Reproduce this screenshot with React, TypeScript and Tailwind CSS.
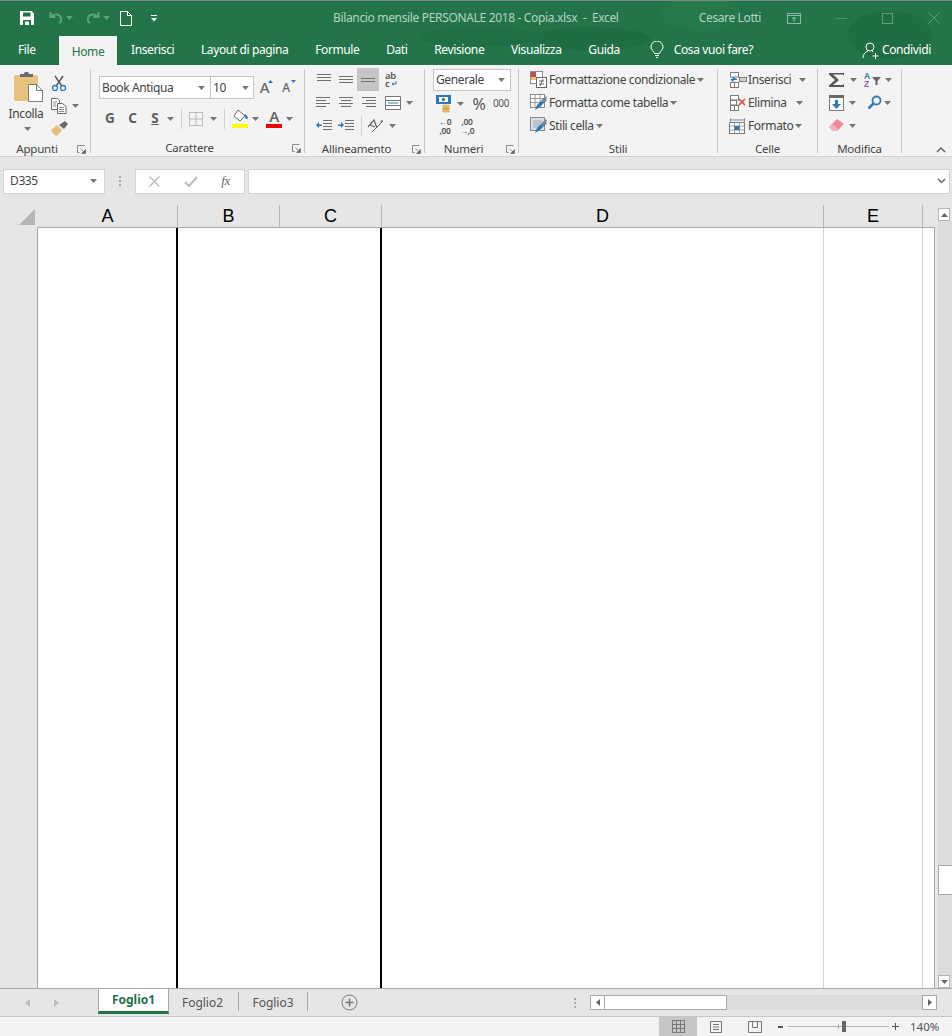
import React from "react";

const Caret = ({ c = "#747474", className = "" }: { c?: string; className?: string }) => (
  <svg width="7" height="4" viewBox="0 0 7 4" className={"shrink-0 " + className}><path d="M0 0h7L3.500 4z" fill={c} /></svg>
);

const Sep = () => <div className="w-px h-[84px] bg-[#c6c6c6] shrink-0 mt-1" />;

const Launcher = () => (
  <svg width="9" height="9" viewBox="0 0 9 9" className="shrink-0">
    <path d="M.5 .5h7M.5 .5v7M.5 7.500h2" stroke="#8a8a8a" fill="none" />
    <path d="M3.500 3.500l4 4M8.500 4.500v4h-4z" stroke="#6a6a6a" fill="#6a6a6a" strokeWidth=".7" />
  </svg>
);

const GroupLabel = ({ text, launcher, right = 4 }: { text: string; launcher?: boolean; right?: number }) => (
  <div className={"h-[16px] mt-[2px] relative flex items-center justify-center text-[11.5px] tracking-[-0.2px] text-[#444] " + (launcher ? "pr-[16px]" : "")}>
    {text}
    {launcher && <span className="absolute top-[4px] flex" style={{ right }}><Launcher /></span>}
  </div>
);

const Lines = ({ rows }: { rows: [number, number][] }) => (
  <svg width="16" height="16" viewBox="0 0 16 16">
    {rows.map(([x, w], i) => (
      <rect key={i} x={x} y={2 + i * 3} width={w} height="1" fill="#6f6f6f" />
    ))}
  </svg>
);

const Cell = ({ children, w = 22, bg = "" }: { children?: React.ReactNode; w?: number; bg?: string }) => (
  <div className={"flex items-center justify-center h-[23px] shrink-0 " + bg} style={{ width: w }}>{children}</div>
);

const Paste = () => (
  <svg width="30" height="32" viewBox="0 0 30 32">
    <rect x="0" y="4" width="24" height="26" rx="2" fill="#e9c27e" />
    <path d="M6 5V3h4c0-3 5-3 5 0h4v3H6z" fill="#6b6b6b" />
    <path d="M14.500 13.500h8l6 6v11h-14z" fill="#fff" stroke="#7a7a7a" />
    <path d="M22.500 13.500v6h6" fill="none" stroke="#7a7a7a" />
  </svg>
);
const Scissors = () => (
  <svg width="16" height="16" viewBox="0 0 16 16" fill="none">
    <path d="M4 1l6.500 9.500M12 1L5.500 10.500" stroke="#555" strokeWidth="1.400" />
    <circle cx="4" cy="13" r="2.500" stroke="#2f78b8" strokeWidth="1.300" />
    <circle cx="12" cy="13" r="2.500" stroke="#2f78b8" strokeWidth="1.300" />
  </svg>
);
const Copy = () => (
  <svg width="16" height="16" viewBox="0 0 16 16" fill="#fff" stroke="#6a6a6a">
    <path d="M.5 .5h6l2 2v9h-8z" />
    <path d="M6.500 5.500h5l3.500 3v7h-8.500z" />
    <path d="M8 9.500h5M8 11.500h5M8 13.500h5M2 4h4M2 6h3M2 8h3" strokeWidth=".8" />
  </svg>
);
const Brush = () => (
  <svg width="17" height="15" viewBox="0 0 17 15">
    <path d="M0 9l6-5 5 5-5 6c-1 0-5-3-6-6z" fill="#e8bf7a" />
    <path d="M8 4l6-4 3 3-4 5z" fill="#6a6a6a" />
  </svg>
);
const Bold = ({ t, u }: { t: string; u?: boolean }) => (
  <span className={"text-[13.5px] font-bold text-[#5f5f5f] leading-none tracking-normal " + (u ? "underline" : "")}>{t}</span>
);
const BorderIcon = () => (
  <svg width="14" height="14" viewBox="0 0 14 14" fill="none" stroke="#8a8a8a" strokeDasharray="1 1">
    <path d="M.5 .5h13v13H.5zM7 .5v13M.5 7h13" />
  </svg>
);
const FillIcon = () => (
  <svg width="17" height="19" viewBox="0 0 17 19">
    <path d="M6 1l7 6-5 5-6-5z" fill="#fff" stroke="#666" />
    <path d="M13 5c2 1 3 3 3 5-2 0-4-2-4-3z" fill="#3d7ab5" />
    <rect x="0" y="15" width="16" height="4" fill="#ffff00" />
  </svg>
);
const FontColor = () => (
  <div className="flex flex-col items-center w-4 h-[19px] relative">
    <span className="text-[15px] leading-[15px] font-semibold text-[#666]">A</span>
    <div className="w-4 h-1 bg-[#f00000]" />
  </div>
);
const Money = () => (
  <svg width="16" height="18" viewBox="0 0 16 18">
    <rect x="0" y="0" width="15" height="9" fill="#2f78b8" />
    <rect x="3" y="2" width="9" height="5" fill="#fff" />
    <circle cx="7.500" cy="4.500" r="1.700" fill="#2f78b8" />
    <ellipse cx="10" cy="11" rx="4" ry="1.600" fill="#e3b860" />
    <ellipse cx="10" cy="13.500" rx="4" ry="1.600" fill="#d6a648" />
    <ellipse cx="10" cy="16" rx="4" ry="1.600" fill="#e3b860" />
  </svg>
);
const Indent = ({ right }: { right?: boolean }) => (
  <svg width="16" height="13" viewBox="0 0 16 13">
    <path d="M7 1.500h9M7 4.500h9M7 7.500h9M7 10.500h9" stroke="#6f6f6f" />
    <path d={right ? "M0 5.500h3V3l3 3-3 3V7H0z" : "M6 5.500H3V3L0 6l3 3V7h3z"} fill="#2f78b8" />
  </svg>
);
const Orient = () => (
  <svg width="20" height="16" viewBox="0 0 20 16" fill="none">
    <path d="M1 9l6-7 3 8M3 7l5 2" stroke="#666" strokeWidth="1.200" />
    <path d="M5 14L15 4" stroke="#666" />
    <path d="M16 2l-3 1 2 2z" fill="#666" />
  </svg>
);
const Wrap = () => (
  <svg width="16" height="18" viewBox="0 0 16 18" fill="none">
    <text x="1" y="7.500" fontSize="9.500" fontWeight="600" fontFamily="Noto Sans" fill="#555">ab</text>
    <text x="1" y="15.500" fontSize="9.500" fontWeight="600" fontFamily="Noto Sans" fill="#555">c</text>
    <path d="M12 10v3H8M9.500 11.500L8 13l1.500 1.500" stroke="#2f78b8" />
  </svg>
);
const CondFmt = () => (
  <svg width="17" height="17" viewBox="0 0 17 17">
    <rect x=".5" y=".5" width="12" height="12" fill="#fff" stroke="#8a8a8a" />
    <rect x="1" y="1" width="5" height="5" fill="#c0504d" />
    <rect x="1" y="6" width="5" height="3" fill="#e8bf7a" />
    <rect x="6.500" y="6.500" width="10" height="10" fill="#fff" stroke="#666" />
    <path d="M9 10h5M9 13h5M13 8l-3 7" stroke="#555" strokeWidth=".9" />
  </svg>
);
const TableFmt = ({ solid }: { solid?: boolean }) => (
  <svg width="17" height="17" viewBox="0 0 17 17">
    <rect x=".5" y=".5" width="14" height="13" fill={solid ? "#d7dfe8" : "#fff"} stroke="#8a8a8a" />
    {!solid && <path d="M.5 4.500h14M.5 8.500h14M5 .5v13M10 .5v13" stroke="#9a9a9a" />}
    {solid && <rect x="3" y="3" width="9" height="8" fill="#b8c4d2" />}
    <path d="M5 16l2-5 7-7 3 2-7 7z" fill="#2f78b8" />
    <path d="M11 7l5-5 1 2-4 5z" fill="#8a8a8a" />
  </svg>
);
const CellsIcon = ({ kind }: { kind: "ins" | "del" | "fmt" }) => (
  <svg width="18" height="16" viewBox="0 0 18 16" fill="#fff" stroke="#7a7a7a">
    {kind === "fmt" ? (
      <>
        <path d="M1.500 .5v3M15.500 .5v3M2 2h13" stroke="#4d6f94" strokeWidth=".8" />
        <rect x=".5" y="4.500" width="15" height="11" />
        <path d="M.5 8h15M.5 12h15M5.500 4.500v11M10.500 4.500v11" strokeWidth=".7" />
        <rect x="5.500" y="8" width="5" height="4" fill="#2f78b8" stroke="none" />
      </>
    ) : (
      <>
        <rect x="1.500" y=".5" width="8" height="4.500" />
        <rect x="1.500" y="10.500" width="8" height="5" />
        <path d="M5.500 10.500v5" />
        {kind === "ins" ? (
          <>
            <rect x="10.500" y="5.500" width="7" height="4" fill="#d0d0d0" />
            <path d="M0 7.500h6l-2-2v4z" fill="#2f78b8" stroke="#2f78b8" transform="rotate(180 4 7.500)" />
          </>
        ) : (
          <>
            <rect x="1.500" y="5.500" width="6" height="4.500" />
            <path d="M10 4l6 6M16 4l-6 6" stroke="#d0492f" strokeWidth="1.500" />
          </>
        )}
      </>
    )}
  </svg>
);
const Sigma = () => (
  <svg width="16" height="14" viewBox="0 0 16 14"><path d="M0 0h15v3l-1-1.500H4l6 5.500-6 5h10l1-1.500v3.500H0v-1.500L6 7 0 1.500z" fill="#555" /></svg>
);
const Sort = () => (
  <svg width="22" height="17" viewBox="0 0 22 17">
    <text x="0" y="7.500" fontSize="8.500" fontFamily="Liberation Sans" fontWeight="700" fill="#2f78b8">A</text>
    <text x="0" y="16" fontSize="8.500" fontFamily="Liberation Sans" fontWeight="700" fill="#8a5ca8">Z</text>
    <path d="M8 6h9l-3.500 4v4h-2v-4z" fill="#666" />
  </svg>
);
const FillDown = () => (
  <svg width="15" height="16" viewBox="0 0 15 16">
    <rect x=".5" y=".5" width="14" height="15" fill="#fff" stroke="#7a7a7a" />
    <rect x="0" y="0" width="15" height="3" fill="#6a6a6a" />
    <path d="M6 5h3v4h3l-4.500 5L3 9h3z" fill="#2f78b8" />
  </svg>
);
const Search = () => (
  <svg width="15" height="15" viewBox="0 0 15 15" fill="none">
    <circle cx="9.500" cy="5.500" r="4" stroke="#2f78b8" strokeWidth="1.800" />
    <path d="M6.500 8.500L1.500 13.500" stroke="#2f78b8" strokeWidth="2.500" />
  </svg>
);
const Eraser = () => (
  <svg width="15" height="13" viewBox="0 0 15 13">
    <path d="M0 8l8-8 7 5-7 7H4z" fill="#ef8a98" />
    <path d="M0 8l3-3 6 5-2 2H4z" fill="#f3b4bd" />
  </svg>
);

const Tabs = () => (
  <div className="flex items-end h-8 text-[12px] text-white relative">
    <div className="w-[59px] pl-[18px] h-8 flex items-center">File</div>
    <div className="w-[58px] h-[30px] bg-[#f3f3f3] text-[#217346] flex items-center justify-center pt-[2px]">Home</div>
    <div className="flex h-8 items-center gap-[26.7px] pl-[14px]">
      <span>Inserisci</span>
      <span>Layout di pagina</span>
      <span>Formule</span>
      <span>Dati</span>
      <span>Revisione</span>
      <span>Visualizza</span>
      <span>Guida</span>
    </div>
    <div className="flex h-8 items-center ml-[30px] gap-[10px]">
      <svg width="14" height="18" viewBox="0 0 14 18" fill="none" stroke="#fff"><path d="M4.500 12.500C4 10 1 9 1 6a6 6 0 0 1 12 0c0 3-3 4-3.500 6.500zM5 14.500h4M6 16.500h2" /></svg>
      <span>Cosa vuoi fare?</span>
    </div>
    <div className="flex h-8 items-center ml-auto pr-[21px] gap-[3px]">
      <svg width="17" height="17" viewBox="0 0 17 17" fill="none" stroke="#fff"><circle cx="8" cy="5" r="4" /><path d="M1 16c0-4 2.500-6 5-7M10 9l1 1M10.500 14h6M13.500 11v6" /></svg>
      <span>Condividi</span>
    </div>
  </div>
);

const TitleBar = () => (
  <div className="h-8 flex items-center relative mt-px">
    <div className="flex items-center pl-[19px]">
      <svg width="16" height="16" viewBox="0 0 16 16"><path d="M1 1h11.500L15 3.500V15H1z" fill="#fff" /><rect x="4" y="2.500" width="7.500" height="4" fill="#217346" /><rect x="4" y="10" width="8" height="5" fill="#217346" /><rect x="6" y="11.500" width="4" height="3.500" fill="#fff" /></svg>
      <svg width="14" height="14" viewBox="0 0 14 14" fill="none" stroke="#5f9d7b" strokeWidth="2" className="ml-[14px]"><path d="M1.500 1v5h5M2 6c3-4 9-3 10 1 .5 2 0 4-2 5" /></svg>
      <Caret c="#5f9d7b" className="ml-[3px]" />
      <svg width="14" height="14" viewBox="0 0 14 14" fill="none" stroke="#5f9d7b" strokeWidth="2" className="ml-[13px]"><path d="M12.500 1v5h-5M12 6C9 2 3 3 2 7c-.5 2 0 4 2 5" /></svg>
      <Caret c="#5f9d7b" className="ml-[3px]" />
      <svg width="12" height="15" viewBox="0 0 12 15" fill="none" stroke="#fff" className="ml-[10px]"><path d="M.5 .5h7l4 4v10H.5zM7.500 .5v4h4" /></svg>
      <svg width="7" height="7" viewBox="0 0 7 7" className="ml-[19px]"><path d="M0 0h6v1H0zM0 3h6L3 6.500z" fill="#fff" /></svg>
    </div>
    <div className="absolute left-[333px] text-[12px] tracking-[-0.34px] text-[#b5d2c2] whitespace-pre">Bilancio mensile PERSONALE 2018 - Copia.xlsx  -  Excel</div>
    <div className="ml-auto flex items-center">
      <span className="text-[12px] text-[#b5d2c2]">Cesare Lotti</span>
      <svg width="14" height="11" viewBox="0 0 14 11" fill="none" stroke="#8fbaa3" className="ml-[26px]"><path d="M.5 .5h13v10H.5zM.5 2.500h13M7 9V4M5 6l2-2 2 2" /></svg>
      <div className="w-[11px] h-px bg-[#4f9270] ml-[35px]" />
      <div className="w-[11px] h-[11px] border border-[#5f9d7b] ml-[35px]" />
      <svg width="12" height="12" viewBox="0 0 12 12" stroke="#5f9d7b" className="ml-[35px] mr-[12px]"><path d="M.5 .5l11 11M11.500 .5l-11 11" /></svg>
    </div>
  </div>
);

const Ribbon = () => (
  <div className="h-[92px] bg-[#f3f3f3] border-b border-[#d2d2d2] flex text-[12px] text-[#444] shrink-0">
    {/* Appunti */}
    <div className="w-[90px] flex flex-col shrink-0">
      <div className="h-[66px] flex mt-[6px] mb-[2px]">
        <div className="w-[50px] flex flex-col items-center pl-[4px]">
          <span className="flex pl-[4px]"><Paste /></span>
          <span className="mt-[2px] leading-[17px] pr-[2px]">Incolla</span>
          <Caret className="mt-[5px]" />
        </div>
        <div className="flex flex-col">
          <Cell w={18}><Scissors /></Cell>
          <div className="flex items-center h-[23px]"><Cell w={18}><Copy /></Cell><Caret className="ml-[4px]" /></div>
          <Cell w={18}><Brush /></Cell>
        </div>
      </div>
      <GroupLabel text="Appunti" launcher />
    </div>
    <Sep />
    {/* Carattere */}
    <div className="w-[213px] flex flex-col shrink-0">
      <div className="h-[66px] mt-[6px] mb-[2px] pl-[8px] pt-[5px]">
        <div className="flex items-center">
          <div className="w-[112px] h-[23px] bg-white border border-[#c6c6c6] flex items-center justify-between px-[2px] pr-[5px]"><span>Book Antiqua</span><Caret /></div>
          <div className="w-[43px] h-[23px] bg-white border border-l-0 border-[#c6c6c6] flex items-center justify-between pl-[2px] pr-[4px]"><span>10</span><Caret /></div>
          <span className="relative w-[21px] text-center text-[15px] font-medium text-[#666] leading-none">A<svg width="5" height="3" className="absolute right-[2px] top-[0px]"><path d="M0 3h5L2.500 0z" fill="#2f78b8" /></svg></span>
          <span className="relative w-[22px] text-center text-[12px] font-medium text-[#666] leading-none">A<svg width="5" height="3" className="absolute right-[1px] top-[-2px]"><path d="M0 0h5L2.500 3z" fill="#2f78b8" /></svg></span>
        </div>
        <div className="flex items-center mt-[8px]">
          <Cell w={22}><Bold t="G" /></Cell>
          <Cell w={23}><Bold t="C" /></Cell>
          <Cell w={22}><Bold t="S" u /></Cell>
          <Caret className="ml-[1px]" />
          <div className="w-px h-5 bg-[#d0d0d0] ml-[7px]" />
          <Cell w={28}><BorderIcon /></Cell>
          <Caret />
          <div className="w-px h-5 bg-[#d0d0d0] ml-[7px]" />
          <Cell w={30}><FillIcon /></Cell>
          <Caret className="ml-[-3px]" />
          <Cell w={30}><FontColor /></Cell>
          <Caret className="ml-[-3px]" />
        </div>
      </div>
      <GroupLabel text="Carattere" launcher right={3} />
    </div>
    <Sep />
    {/* Allineamento */}
    <div className="w-[119px] flex flex-col shrink-0">
      <div className="h-[66px] mt-[3px] mb-[5px] pl-[8px]">
        <div className="flex items-center">
          <Cell><Lines rows={[[1, 14], [1, 14], [1, 14]]} /></Cell>
          <Cell><span className="pt-1"><Lines rows={[[1, 14], [1, 14], [1, 14]]} /></span></Cell>
          <Cell bg="bg-[#c6c6c6]"><span className="pt-2"><Lines rows={[[1, 14], [1, 14]]} /></span></Cell>
          <div className="w-[26px] h-[23px] flex items-center justify-center"><Wrap /></div>
        </div>
        <div className="flex items-center">
          <Cell><Lines rows={[[0, 14], [0, 10], [0, 14], [0, 10]]} /></Cell>
          <Cell><Lines rows={[[1, 14], [3, 10], [1, 14], [3, 10]]} /></Cell>
          <Cell><Lines rows={[[2, 14], [6, 10], [2, 14], [6, 10]]} /></Cell>
          <svg width="16" height="14" viewBox="0 0 16 14" fill="#fff" stroke="#777" className="ml-[6px]"><path d="M.5 .5h15v13H.5zM.5 4.500h15M.5 9.500h15" /><path d="M3 7h10" stroke="#2f78b8" /></svg>
          <Caret className="ml-[5px]" />
        </div>
        <div className="flex items-center">
          <Cell><Indent /></Cell>
          <Cell><Indent right /></Cell>
          <div className="w-px h-5 bg-[#d0d0d0] ml-[4px]" />
          <Cell w={30}><Orient /></Cell>
          <Caret className="ml-[-3px]" />
        </div>
      </div>
      <GroupLabel text="Allineamento" launcher right={3} />
    </div>
    <Sep />
    {/* Numeri */}
    <div className="w-[93px] flex flex-col shrink-0">
      <div className="h-[66px] mt-[4px] mb-[4px] pl-[8px]">
        <div className="w-[78px] h-[22px] bg-white border border-[#c6c6c6] flex items-center justify-between pl-[2px] pr-[5px] mb-[1px]"><span>Generale</span><Caret /></div>
        <div className="flex items-center h-[23px]">
          <span className="ml-[3px] flex"><Money /></span>
          <Caret className="ml-[5px]" />
          <span className="w-[24px] ml-[3px] text-center text-[16px] leading-none text-[#555]">%</span>
          <span className="ml-[2px] text-[10px] text-[#555]">000</span>
        </div>
        <div className="flex items-center h-[21px] text-[8.5px] leading-[9px] text-[#555] font-semibold">
          <span className="w-[22px] ml-[1px] text-center"><span className="text-[#2f78b8]">←</span>0<br />,00</span>
          <span className="w-[22px] text-center">,00<br /><span className="text-[#2f78b8]">→</span>,0</span>
        </div>
      </div>
      <GroupLabel text="Numeri" launcher right={3} />
    </div>
    <Sep />
    {/* Stili */}
    <div className="w-[198px] flex flex-col shrink-0">
      <div className="h-[66px] mt-[3px] mb-[5px] pl-[11px]">
        <div className="flex items-center h-[23px] gap-[2px]"><span className="w-[17px] flex justify-center"><CondFmt /></span><span>Formattazione condizionale</span><Caret /></div>
        <div className="flex items-center h-[23px] gap-[2px]"><span className="w-[17px] flex justify-center"><TableFmt /></span><span>Formatta come tabella</span><Caret /></div>
        <div className="flex items-center h-[23px] gap-[2px]"><span className="w-[17px] flex justify-center"><TableFmt solid /></span><span>Stili cella</span><Caret /></div>
      </div>
      <GroupLabel text="Stili" />
    </div>
    <Sep />
    {/* Celle */}
    <div className="w-[99px] flex flex-col shrink-0">
      <div className="h-[66px] mt-[3px] mb-[5px] pl-[11px]">
        <div className="flex items-center h-[23px]"><CellsIcon kind="ins" /><span className="ml-[1px] w-[50px]">Inserisci</span><Caret className="ml-[1px]" /></div>
        <div className="flex items-center h-[23px]"><CellsIcon kind="del" /><span className="ml-[1px] w-[47px]">Elimina</span><Caret className="ml-[1px]" /></div>
        <div className="flex items-center h-[23px]"><CellsIcon kind="fmt" /><span className="ml-[1px] w-[45px]">Formato</span><Caret className="ml-[2px]" /></div>
      </div>
      <GroupLabel text="Celle" />
    </div>
    <Sep />
    {/* Modifica */}
    <div className="w-[83px] flex flex-col shrink-0">
      <div className="h-[66px] mt-[3px] mb-[5px] pl-[11px]">
        <div className="flex items-center h-[23px]"><Sigma /><Caret className="ml-[5px]" /><span className="ml-[7px] flex"><Sort /></span><Caret className="ml-[-1px]" /></div>
        <div className="flex items-center h-[23px]"><FillDown /><Caret className="ml-[5px]" /><span className="ml-[11px] flex"><Search /></span><Caret className="ml-[2px]" /></div>
        <div className="flex items-center h-[23px]"><Eraser /><Caret className="ml-[5px]" /></div>
      </div>
      <GroupLabel text="Modifica" />
    </div>
    <Sep />
    <div className="flex-1 flex items-end justify-end pr-[6px] pb-[3px]">
      <svg width="10" height="6" viewBox="0 0 10 6" fill="none" stroke="#666" strokeWidth="1.500"><path d="M1 5l4-4 4 4" /></svg>
    </div>
  </div>
);

const FormulaBar = () => (
  <div className="h-[48px] bg-[#e6e6e6] flex items-center pl-[3px] pr-[2px] text-[12px] text-[#444] shrink-0">
    <div className="w-[102px] h-[25px] bg-white border border-[#d4d4d4] flex items-center justify-between pl-[6px] pr-[7px]"><span>D335</span><Caret c="#777" /></div>
    <div className="w-[30px] flex flex-col items-center gap-[2px]">
      <i className="w-[2px] h-[2px] bg-[#aaa]" /><i className="w-[2px] h-[2px] bg-[#aaa]" /><i className="w-[2px] h-[2px] bg-[#aaa]" />
    </div>
    <div className="w-[110px] h-[25px] bg-white border border-[#d4d4d4] flex items-center">
      <Cell w={36}><svg width="11" height="11" viewBox="0 0 11 11" stroke="#bdbdbd" strokeWidth="1.500"><path d="M.5 .5l10 10M10.500 .5l-10 10" /></svg></Cell>
      <Cell w={37}><svg width="14" height="11" viewBox="0 0 14 11" fill="none" stroke="#bdbdbd" strokeWidth="2"><path d="M1 6l4 4 8-9" /></svg></Cell>
      <Cell w={35}><span className="text-[13px] italic text-[#666] font-['Liberation_Serif',serif] pr-[2px]">fx</span></Cell>
    </div>
    <div className="flex-1 ml-[3px] h-[25px] bg-white border border-[#d4d4d4] flex items-center justify-end pr-[3px]">
      <svg width="9" height="6" viewBox="0 0 9 6" fill="none" stroke="#666" strokeWidth="1.500"><path d="M1 1l3.500 3.500L8 1" /></svg>
    </div>
  </div>
);

const ColHead = ({ t, w }: { t?: string; w: number }) => (
  <div className="h-full flex items-center justify-center shrink-0 border-r border-[#b5b5b5]" style={{ width: w }}>{t}</div>
);

const Sheet = () => (
  <div className="flex-1 flex flex-col min-h-0">
    <div className="h-[22px] bg-[#e6e6e6] flex text-[18px] leading-none tracking-normal text-black font-['Liberation_Sans',sans-serif] shrink-0">
      <div className="w-[38px] h-full flex items-end justify-end shrink-0 pr-[3px] pb-[2px]">
        <svg width="16" height="16"><path d="M16 0v16H0z" fill="#b5b5b5" /></svg>
      </div>
      <ColHead t="A" w={140} />
      <ColHead t="B" w={102} />
      <ColHead t="C" w={102} />
      <ColHead t="D" w={442} />
      <ColHead t="E" w={99} />
      <div className="w-[15px] shrink-0" />
      <div className="pt-[3px]">
        <div className="w-[12px] h-[13px] bg-white border border-[#b5b5b5] flex items-center justify-center"><svg width="7" height="4"><path d="M0 4h7L3.500 0z" fill="#666" /></svg></div>
      </div>
    </div>
    <div className="flex-1 flex min-h-0">
      <div className="w-[38px] bg-[#e6e6e6] border-r border-[#a9a9a9] shrink-0" />
      <div className="w-[897px] bg-white border-t border-r border-[#a9a9a9] flex shrink-0">
        <div className="w-[140px] border-r-2 border-black shrink-0" />
        <div className="w-[204px] border-r-2 border-black shrink-0" />
        <div className="w-[442px] border-r border-[#d4d4d4] shrink-0" />
        <div className="w-[99px] border-r border-[#d4d4d4] shrink-0" />
      </div>
      <div className="flex-1 bg-[#e6e6e6] relative">
        <div className="absolute left-[3px] right-0 top-[-6px] bottom-[-1px] bg-[#dcdcdc]">
          <div className="absolute left-0 right-0 top-[644px] h-[30px] bg-white border border-r-0 border-[#a9a9a9]" />
        </div>
        <div className="absolute left-[3px] right-[2px] bottom-0 h-[13px] bg-white border border-[#b5b5b5] flex items-center justify-center"><svg width="7" height="4"><path d="M0 0h7L3.500 4z" fill="#666" /></svg></div>
      </div>
    </div>
  </div>
);

const SheetTabs = () => (
  <div className="h-[29px] bg-[#e6e6e6] border-t border-b border-t-[#a9a9a9] border-b-[#c6c6c6] flex items-stretch text-[12px] tracking-normal text-[#555] shrink-0 relative">
    <div className="w-[98px] flex items-center pl-[25px] gap-[24px] shrink-0">
      <svg width="5" height="8"><path d="M5 0v8L0 4z" fill="#bdbdbd" /></svg>
      <svg width="5" height="8"><path d="M0 0v8l5-4z" fill="#bdbdbd" /></svg>
    </div>
    <div className="w-[71px] -mt-px h-[26px] bg-white border-l border-r border-t border-[#a9a9a9] border-b-[3px] border-b-[#217346] flex items-center justify-center font-bold text-[#217346] shrink-0">Foglio1</div>
    <div className="w-[69px] flex items-center justify-center pr-[2px] shrink-0">Foglio2</div>
    <div className="w-px h-[19px] mt-[3px] bg-[#a9a9a9]" />
    <div className="w-[68px] flex items-center justify-center shrink-0">Foglio3</div>
    <div className="w-px h-[19px] mt-[3px] bg-[#a9a9a9]" />
    <div className="ml-[33px] flex items-center shrink-0">
      <svg width="17" height="17" viewBox="0 0 17 17" fill="none" stroke="#777"><circle cx="8.500" cy="8.500" r="7.500" /><path d="M8.500 4.500v8M4.500 8.500h8" strokeWidth="1.500" /></svg>
    </div>
    <div className="ml-[216px] w-[2px] flex flex-col justify-center gap-[2px] shrink-0">
      <i className="w-[2px] h-[2px] bg-[#aaa]" /><i className="w-[2px] h-[2px] bg-[#aaa]" /><i className="w-[2px] h-[2px] bg-[#aaa]" />
    </div>
    <div className="ml-[14px] w-[347px] flex items-center shrink-0">
      <div className="w-[15px] h-[15px] bg-white border border-[#a9a9a9] flex items-center justify-center shrink-0"><svg width="4" height="7"><path d="M4 0v7L0 3.500z" fill="#666" /></svg></div>
      <div className="w-[122px] h-[15px] bg-white border border-l-0 border-[#a9a9a9] shrink-0" />
      <div className="flex-1 h-[15px] bg-[#dcdcdc]" />
      <div className="w-[15px] h-[15px] bg-white border border-[#a9a9a9] flex items-center justify-center shrink-0"><svg width="4" height="7"><path d="M0 0v7l4-3.500z" fill="#666" /></svg></div>
    </div>
  </div>
);

const StatusBar = () => (
  <div className="h-[19px] bg-[#f3f3f3] flex items-center text-[12px] tracking-normal text-[#555] shrink-0">
    <div className="ml-[659px] w-[38px] h-full bg-[#c6c6c6] flex items-center justify-center shrink-0">
      <svg width="13" height="13" viewBox="0 0 13 13" fill="none" stroke="#777"><path d="M.5 .5h12v12H.5zM4.500 .5v12M8.500 .5v12M.5 4.500h12M.5 8.500h12" /></svg>
    </div>
    <div className="w-[38px] flex justify-center shrink-0">
      <svg width="12" height="12" viewBox="0 0 12 12" fill="none" stroke="#777"><path d="M.5 .5h11v11H.5zM3 3.500h6M3 6h6M3 8.500h6" /></svg>
    </div>
    <div className="w-[40px] flex justify-center shrink-0">
      <svg width="14" height="12" viewBox="0 0 14 12" fill="none" stroke="#777"><path d="M.5 .5h13v11H.5zM4.500 .5v6h5v-6" /></svg>
    </div>
    <div className="ml-[3px] w-[5px] h-[2px] bg-[#555] shrink-0" />
    <div className="ml-[5px] w-[100px] h-px bg-[#b5b5b5] relative shrink-0">
      <div className="absolute left-[50px] -top-[2px] w-px h-[5px] bg-[#aaa]" />
      <div className="absolute left-[54px] -top-[5px] w-[4px] h-[11px] bg-[#666]" />
    </div>
    <svg width="7" height="7" className="ml-[4px] shrink-0"><path d="M3 0h1v3h3v1H4v3H3V4H0V3h3z" fill="#555" /></svg>
    <span className="ml-[11px] text-[11.5px]">140%</span>
  </div>
);

export default function App() {
  return (
    <div className="w-[952px] h-[1036px] flex flex-col overflow-hidden font-['Noto_Sans',sans-serif] tracking-[-0.38px] bg-[#e6e6e6]">
      <div className="h-[65px] bg-[#237549] relative overflow-hidden shrink-0 border-t border-[#7d8a83]">
        <svg className="absolute inset-0" width="952" height="65" viewBox="0 0 952 65">
          <ellipse cx="480" cy="36" rx="60" ry="10" fill="#206e44" />
          <ellipse cx="590" cy="38" rx="60" ry="12" fill="#1f6d43" />
          <ellipse cx="890" cy="34" rx="42" ry="24" fill="#1f6d43" />
          <ellipse cx="700" cy="12" rx="40" ry="18" fill="#257849" />
        </svg>
        <div className="relative">
          <TitleBar />
          <Tabs />
        </div>
      </div>
      <Ribbon />
      <FormulaBar />
      <Sheet />
      <SheetTabs />
      <StatusBar />
    </div>
  );
}
